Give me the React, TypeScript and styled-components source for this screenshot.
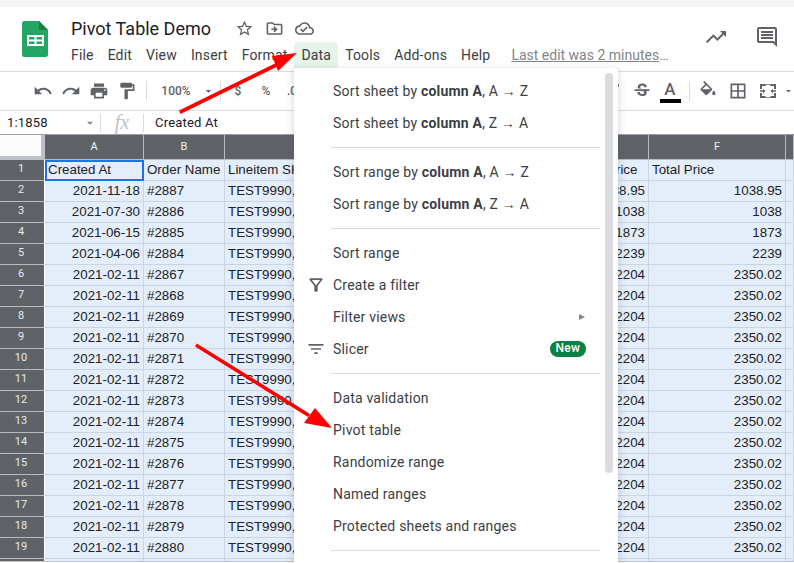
import { createGlobalStyle, styled } from 'styled-components';
import {
  MdArrowDropDown,
  MdBorderAll,
  MdFilterList,
  MdFormatItalic,
  MdFormatPaint,
  MdOutlineCloudDone,
  MdOutlineDriveFileMove,
  MdOutlineFilterAlt,
  MdOutlineInsertComment,
  MdPrint,
  MdRedo,
  MdStarBorder,
  MdStrikethroughS,
  MdTrendingUp,
  MdUndo,
} from 'react-icons/md';

const GlobalStyle = createGlobalStyle`
  html, body {
    margin: 0;
    padding: 0;
    background: #fff;
    overflow: hidden;
  }
  * {
    box-sizing: border-box;
  }
`;

const Page = styled.div`
  position: relative;
  width: 794px;
  height: 563px;
  padding-bottom: 1px;
  overflow: hidden;
  display: flex;
  flex-direction: column;
  font-family: Roboto, 'Liberation Sans', sans-serif;
  color: #3c4043;
`;

const TopStrip = styled.div`
  flex: none;
  height: 7px;
  background: #f5f5f5;
`;

const Header = styled.header`
  flex: none;
  height: 65px;
  display: flex;
  border-bottom: 1px solid #dadce0;
  padding-left: 22px;
`;

const Logo = styled.svg`
  flex: none;
  width: 26px;
  height: 36px;
  margin-top: 14px;
`;

const TitleBlock = styled.div`
  margin-left: 23px;
  flex: 1;
  display: flex;
  flex-direction: column;
`;

const TitleRow = styled.div`
  height: 35px;
  padding-top: 7px;
  display: flex;
  align-items: center;
`;

const DocTitle = styled.div`
  font-size: 18px;
  color: #202124;
  margin: 0 18px 0 0;
`;

const TitleIcon = styled.span`
  width: 30px;
  display: flex;
  justify-content: center;
  color: #5f6368;
  font-size: 19px;
`;

const MenuBar = styled.nav`
  display: flex;
  align-items: center;
  height: 26px;
  margin-left: -7px;
`;

const MenuLabel = styled.div<{ $open?: boolean }>`
  height: 26px;
  padding: 0 7px;
  font-size: 14px;
  line-height: 27px;
  letter-spacing: 0.16px;
  color: #3c4043;
  border-radius: 4px 4px 0 0;
  background: ${(p) => (p.$open ? '#e6f4ea' : 'transparent')};
`;

const LastEdit = styled.div`
  margin-left: 14px;
  font-size: 14px;
  line-height: 27px;
  color: #80868b;
`;

const LastEditLink = styled.span`
  text-decoration: underline;
`;

const SideActions = styled.div`
  flex: none;
  display: flex;
  gap: 27px;
  padding: 18px 15px 0 0;
  font-size: 24px;
  color: #5f6368;
`;

const Toolbar = styled.div`
  flex: none;
  height: 39px;
  display: flex;
  align-items: center;
  justify-content: space-between;
  padding: 0 0 0 29px;
  border-bottom: 1px solid #dadce0;
`;

const ToolGroup = styled.div`
  display: flex;
  align-items: center;
`;

const Tool = styled.span<{ $w?: number }>`
  width: ${(p) => p.$w ?? 28}px;
  height: 24px;
  display: flex;
  align-items: center;
  justify-content: center;
  color: #5f6368;
  font-size: 20px;
`;

const ToolText = styled.span<{ $w: number }>`
  width: ${(p) => p.$w}px;
  text-align: center;
  font-size: 12px;
  font-weight: 500;
  color: #5f6368;
`;

const ToolDivider = styled.span`
  width: 1px;
  height: 20px;
  margin: 0 3px 0 5px;
  background: #dadce0;
`;

const TextColor = styled.span`
  width: 28px;
  height: 24px;
  display: flex;
  flex-direction: column;
  align-items: center;
  font-size: 17px;
  font-weight: 500;
  line-height: 20px;
  color: #5f6368;
`;

const ColorBar = styled.span`
  width: 21px;
  height: 4px;
  background: #000;
`;

const FormulaBar = styled.div`
  flex: none;
  height: 23px;
  display: flex;
  align-items: center;
  font-size: 13px;
  color: #202124;
`;

const NameBox = styled.div`
  width: 101px;
  height: 18px;
  padding: 0 0 0 7px;
  display: flex;
  align-items: center;
  justify-content: space-between;
  border-right: 1px solid #dadce0;
  letter-spacing: 0.2px;
`;

const NameCaret = styled.span`
  display: flex;
  color: #80868b;
  font-size: 14px;
  margin-right: 3px;
`;

const FxBox = styled.div`
  width: 43px;
  height: 18px;
  text-align: center;
  border-right: 1px solid #dadce0;
  font-family: 'Liberation Serif', serif;
  font-style: italic;
  font-size: 20px;
  line-height: 17px;
  color: #bdc1c6;
`;

const FormulaText = styled.div`
  margin-left: 11px;
  letter-spacing: 0.2px;
`;

const Sheet = styled.div`
  flex: 1;
  min-height: 0;
  display: grid;
  grid-template-columns: 45px 99px 81px 150px 175px 99px 137px 1fr;
  grid-template-rows: 25px;
  grid-auto-rows: 21px;
  align-content: start;
  border-top: 1px solid #9aa0a6;
  border-bottom: 1px solid #c4c7ca;
  font-family: 'Liberation Sans', Arial, sans-serif;
  font-size: 13.33px;
  overflow: hidden;
`;

const Corner = styled.div`
  background: #fbfbfb;
  border-right: 4px solid #bdc1c6;
  border-bottom: 4px solid #bdc1c6;
`;

const ColHead = styled.div`
  background: #5f6368;
  color: #f1f3f4;
  border-right: 1px solid #b8bcc0;
  border-bottom: 1px solid #b8bcc0;
  font-family: Roboto, sans-serif;
  font-size: 11px;
  line-height: 23px;
  text-align: center;
`;

const RowHead = styled.div`
  background: #5f6368;
  color: #e8eaed;
  border-right: 1px solid #fff;
  border-bottom: 1px solid #b8bcc0;
  padding-right: 2px;
  font-family: Roboto, sans-serif;
  font-size: 11px;
  line-height: 18px;
  text-align: center;
`;

const Cell = styled.div<{ $right?: boolean; $active?: boolean }>`
  background: #e4eefb;
  color: #202124;
  border-right: 1px solid #c9d5e5;
  border-bottom: 1px solid #c9d5e5;
  padding: 0 3px;
  line-height: 20px;
  white-space: nowrap;
  overflow: hidden;
  text-align: ${(p) => (p.$right ? 'right' : 'left')};
  ${(p) => (p.$active ? 'outline: 2px solid #1a73e8; outline-offset: -2px;' : '')}
`;

const MenuPanel = styled.div`
  position: absolute;
  left: 294px;
  top: 68px;
  width: 324px;
  height: 510px;
  padding: 7px 0;
  background: #fff;
  border-radius: 0 4px 4px 4px;
  box-shadow: 0 2px 6px 2px rgba(60, 64, 67, 0.15);
`;

const MenuItem = styled.div`
  height: 32px;
  width: 306px;
  display: flex;
  align-items: center;
  padding: 0 14px 0 39px;
  font-size: 14px;
  letter-spacing: 0.2px;
  color: #3c4043;
  position: relative;
`;

const ItemLabel = styled.span`
  flex: 1;
  white-space: pre;
`;

const ItemIcon = styled.span`
  position: absolute;
  left: 12px;
  top: 6px;
  display: flex;
  font-size: 20px;
  color: #5f6368;
`;

const SubArrow = styled.span`
  width: 0;
  height: 0;
  border-left: 6px solid #80868b;
  border-top: 3px solid transparent;
  border-bottom: 3px solid transparent;
  margin-right: 1px;
`;

const NewBadge = styled.span`
  padding: 0 6px;
  height: 16px;
  line-height: 15px;
  border-radius: 8px;
  background: #0b8043;
  color: #fff;
  font-size: 12px;
  font-weight: 500;
`;

const MenuDivider = styled.div`
  width: 269px;
  height: 1px;
  margin: 8px 0 8px 37px;
  background: #dadce0;
`;

const ScrollThumb = styled.div`
  position: absolute;
  right: 5px;
  top: 5px;
  width: 8px;
  height: 400px;
  border-radius: 4px;
  background: #dadce0;
`;

const Arrows = styled.svg`
  position: absolute;
  inset: 0;
  width: 794px;
  height: 563px;
  pointer-events: none;
`;

const MENUS = ['File', 'Edit', 'View', 'Insert', 'Format', 'Data', 'Tools', 'Add-ons', 'Help'];
const COLUMNS = ['A', 'B', 'C', 'D', 'E', 'F', ''];
const ORDERS = [2887, 2886, 2885, 2884, 2867, 2868, 2869, 2870, 2871, 2872, 2873, 2874, 2875, 2876, 2877, 2878, 2879, 2880];

const dateFor = (i: number) => ['2021-11-18', '2021-07-30', '2021-06-15', '2021-04-06'][i] ?? '2021-02-11';
const priceFor = (i: number) => ['1038.95', '1038', '1873', '2239'][i] ?? '2204';
const totalFor = (i: number) => ['1038.95', '1038', '1873', '2239'][i] ?? '2350.02';

const SheetsLogo = () => (
  <Logo viewBox="0 0 26 36">
    <path d="M2.500 0H17l9 9v24.500a2.500 2.500 0 0 1-2.500 2.500h-21A2.500 2.500 0 0 1 0 33.500v-31A2.500 2.500 0 0 1 2.500 0z" fill="#23a566" />
    <path d="M17 0l9 9h-9z" fill="#188038" />
    <path d="M5 14h17v11H5z" fill="#fff" />
    <path d="M7 16h5.500v2.500H7zM14.500 16H20v2.500h-5.500zM7 20.500h5.500V23H7zM14.500 20.500H20V23h-5.500z" fill="#23a566" />
  </Logo>
);

const FillIcon = () => (
  <svg width="20" height="20" viewBox="0 0 24 24" fill="currentColor">
    <path d="M16.560 8.940L7.620 0 6.210 1.410l2.380 2.380-5.150 5.150c-.59.59-.59 1.540 0 2.120l5.500 5.500c.29.29.68.44 1.060.44s.77-.15 1.060-.44l5.500-5.500c.59-.58.59-1.530 0-2.120zM5.210 10L10 5.210 14.790 10H5.210zM19 11.500s-2 2.170-2 3.500c0 1.100.9 2 2 2s2-.9 2-2c0-1.330-2-3.500-2-3.500z" />
  </svg>
);

const MergeIcon = () => (
  <svg width="18" height="18" viewBox="0 0 18 18" fill="currentColor">
    <path d="M1 2h16v5h-2V4h-3.500V2.800h-5V4H3v3H1zM1 11h2v3h3.500v1.200h5V14H15v-3h2v5H1zM1 8.300h3V6.800L6.500 9 4 11.200V9.700H1zM17 9.700h-3v1.500L11.500 9 14 6.800v1.500h3z" />
  </svg>
);

export default function App() {
  return (
    <Page>
      <GlobalStyle />
      <TopStrip />
      <Header>
        <SheetsLogo />
        <TitleBlock>
          <TitleRow>
            <DocTitle>Pivot Table Demo</DocTitle>
            <TitleIcon><MdStarBorder /></TitleIcon>
            <TitleIcon><MdOutlineDriveFileMove /></TitleIcon>
            <TitleIcon><MdOutlineCloudDone /></TitleIcon>
          </TitleRow>
          <MenuBar>
            {MENUS.map((label) => (
              <MenuLabel key={label} $open={label === 'Data'}>{label}</MenuLabel>
            ))}
            <LastEdit>
              <LastEditLink>Last edit was 2 minutes</LastEditLink>…
            </LastEdit>
          </MenuBar>
        </TitleBlock>
        <SideActions>
          <MdTrendingUp />
          <MdOutlineInsertComment />
        </SideActions>
      </Header>

      <Toolbar>
        <ToolGroup>
          <Tool><MdUndo /></Tool>
          <Tool><MdRedo /></Tool>
          <Tool><MdPrint /></Tool>
          <Tool><MdFormatPaint /></Tool>
          <ToolDivider />
          <ToolText $w={52}>100%</ToolText>
          <Tool $w={13}><MdArrowDropDown /></Tool>
          <ToolDivider />
          <ToolText $w={28}>$</ToolText>
          <ToolText $w={28}>%</ToolText>
          <ToolText $w={24}>.0</ToolText>
        </ToolGroup>
        <ToolGroup>
          <Tool><MdFormatItalic /></Tool>
          <Tool><MdStrikethroughS /></Tool>
          <TextColor>A<ColorBar /></TextColor>
          <ToolDivider />
          <Tool $w={30}><FillIcon /></Tool>
          <Tool $w={30}><MdBorderAll /></Tool>
          <Tool $w={30}><MergeIcon /></Tool>
          <Tool $w={11}><MdArrowDropDown /></Tool>
        </ToolGroup>
      </Toolbar>

      <FormulaBar>
        <NameBox>1:1858<NameCaret><MdArrowDropDown /></NameCaret></NameBox>
        <FxBox>fx</FxBox>
        <FormulaText>Created At</FormulaText>
      </FormulaBar>

      <Sheet>
        <Corner />
        {COLUMNS.map((c, i) => <ColHead key={i}>{c}</ColHead>)}

        <RowHead>1</RowHead>
        <Cell $active>Created At</Cell>
        <Cell>Order Name</Cell>
        <Cell>Lineitem SKU</Cell>
        <Cell />
        <Cell>Lineitem Price</Cell>
        <Cell>Total Price</Cell>
        <Cell />

        {ORDERS.map((order, i) => [
          <RowHead key={`h${order}`}>{i + 2}</RowHead>,
          <Cell key={`a${order}`} $right>{dateFor(i)}</Cell>,
          <Cell key={`b${order}`}>#{order}</Cell>,
          <Cell key={`c${order}`}>TEST9990,</Cell>,
          <Cell key={`d${order}`} />,
          <Cell key={`e${order}`} $right>{priceFor(i)}</Cell>,
          <Cell key={`f${order}`} $right>{totalFor(i)}</Cell>,
          <Cell key={`g${order}`} />,
        ])}

        <RowHead />
        {COLUMNS.map((c, i) => <Cell key={i} />)}
      </Sheet>

      <MenuPanel>
        <ScrollThumb />
        <MenuItem><ItemLabel>Sort sheet by <b>column A</b>, A → Z</ItemLabel></MenuItem>
        <MenuItem><ItemLabel>Sort sheet by <b>column A</b>, Z → A</ItemLabel></MenuItem>
        <MenuDivider />
        <MenuItem><ItemLabel>Sort range by <b>column A</b>, A → Z</ItemLabel></MenuItem>
        <MenuItem><ItemLabel>Sort range by <b>column A</b>, Z → A</ItemLabel></MenuItem>
        <MenuDivider />
        <MenuItem><ItemLabel>Sort range</ItemLabel></MenuItem>
        <MenuItem><ItemIcon><MdOutlineFilterAlt /></ItemIcon><ItemLabel>Create a filter</ItemLabel></MenuItem>
        <MenuItem><ItemLabel>Filter views</ItemLabel><SubArrow /></MenuItem>
        <MenuItem><ItemIcon><MdFilterList /></ItemIcon><ItemLabel>Slicer</ItemLabel><NewBadge>New</NewBadge></MenuItem>
        <MenuDivider />
        <MenuItem><ItemLabel>Data validation</ItemLabel></MenuItem>
        <MenuItem><ItemLabel>Pivot table</ItemLabel></MenuItem>
        <MenuItem><ItemLabel>Randomize range</ItemLabel></MenuItem>
        <MenuItem><ItemLabel>Named ranges</ItemLabel></MenuItem>
        <MenuItem><ItemLabel>Protected sheets and ranges</ItemLabel></MenuItem>
        <MenuDivider />
      </MenuPanel>

      <Arrows viewBox="0 0 794 563">
        <path d="M179 110.500L277 62.500 278.500 66 180.500 114z" fill="#f00" />
        <path d="M297 53L272 56 278 71z" fill="#f00" />
        <path d="M195 346.500L196.800 343.500 310 414 308 417z" fill="#f00" />
        <path d="M332 428L304 423 315 408z" fill="#f00" />
      </Arrows>
    </Page>
  );
}
